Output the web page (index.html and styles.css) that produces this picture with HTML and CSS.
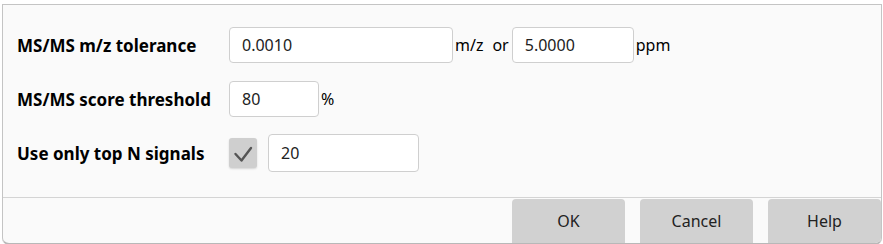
FILE: index.html
```html
<!DOCTYPE html>
<html lang="en">
<head>
    <meta charset="UTF-8">
    <title>MS/MS Settings</title>
    <link rel="stylesheet" href="styles.css">
</head>
<body>
    <div class="dialog">
        <div class="content">
            <div class="row">
                <label class="label">MS/MS m/z tolerance</label>
                <div class="field">
                    <input class="text-input wide" type="text" value="0.0010">
                    <span class="unit">m/z</span>
                    <span class="unit or">or</span>
                    <input class="text-input medium" type="text" value="5.0000">
                    <span class="unit">ppm</span>
                </div>
            </div>
            <div class="row">
                <label class="label">MS/MS score threshold</label>
                <div class="field">
                    <input class="text-input small" type="text" value="80">
                    <span class="unit">%</span>
                </div>
            </div>
            <div class="row">
                <label class="label">Use only top N signals</label>
                <div class="field">
                    <span class="checkbox">
                        <svg width="28" height="30" viewBox="0 0 28 30">
                            <path d="M6.5 16 L12.5 22.5 L22 10" fill="none" stroke="#555" stroke-width="2.4" stroke-linecap="round" stroke-linejoin="round"/>
                        </svg>
                    </span>
                    <input class="text-input topn" type="text" value="20">
                </div>
            </div>
        </div>
        <div class="footer">
            <button class="btn">OK</button>
            <button class="btn">Cancel</button>
            <button class="btn">Help</button>
        </div>
    </div>
</body>
</html>
```

FILE: styles.css
```css
body {
    margin: 0;
    padding: 0;
    background: #ffffff;
    font-family: "Noto Sans", "Open Sans", sans-serif;
    color: #000;
    overflow: hidden;
}
.dialog {
    margin: 4px 1px 0 2px;
    height: 238px;
    border: 1px solid #c4c4c4;
    border-bottom: 2px solid #b8b8b8;
    border-radius: 0 0 7px 7px;
    background: #fafafa;
    overflow: hidden;
    display: flex;
    flex-direction: column;
}
.content {
    height: 193px;
    flex-shrink: 0;
    border-bottom: 1px solid #d4d4d4;
    padding: 22px 0 0 14px;
    box-sizing: border-box;
    display: flex;
    flex-direction: column;
    gap: 18px;
}
.row {
    display: flex;
    align-items: center;
    height: 36px;
}
.label {
    width: 212px;
    font-weight: bold;
    font-size: 17px;
}
.field {
    display: flex;
    align-items: center;
}
.text-input {
    height: 36px;
    box-sizing: border-box;
    border: 1px solid #cfcfcf;
    border-radius: 4px;
    background: #fff;
    font-family: inherit;
    font-size: 16px;
    color: #222;
    padding: 0 12px;
    outline: none;
}
.wide { width: 224px; }
.medium { width: 122px; }
.small { width: 90px; }
.topn { width: 151px; height: 38px; margin-left: 11px; }
.unit {
    font-size: 16px;
    margin-left: 2px;
}
.or {
    margin: 0 3px 0 9px;
}
.checkbox {
    width: 28px;
    height: 30px;
    background: #cfcfcf;
    border-radius: 3px;
    box-shadow: 0 1px 2px rgba(0, 0, 0, 0.15);
    display: block;
}
.checkbox svg {
    display: block;
}
.footer {
    display: flex;
    justify-content: flex-end;
    gap: 15px;
    padding: 1px 0 0 0;
}
.btn {
    width: 113px;
    height: 48px;
    flex-shrink: 0;
    border: none;
    border-radius: 4px 4px 0 0;
    background: #d1d1d1;
    font-family: inherit;
    font-size: 16px;
    color: #222;
    padding: 0 0 4px 0;
}
```
